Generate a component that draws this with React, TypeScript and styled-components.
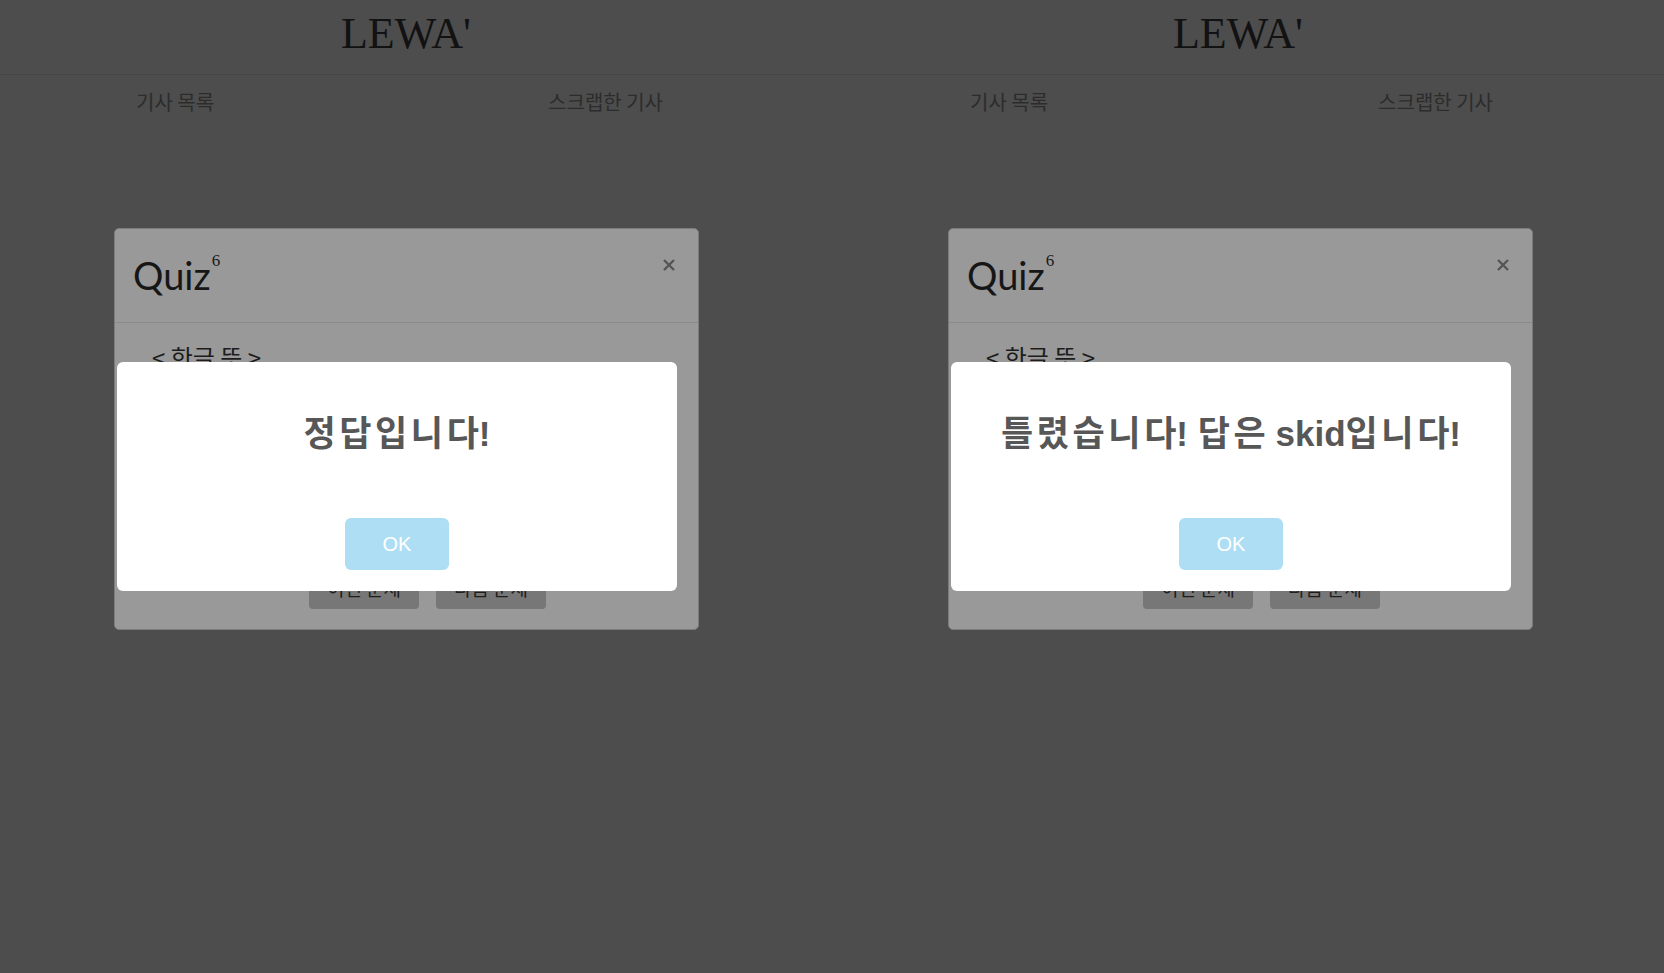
import React from "react";
import styled, { createGlobalStyle } from "styled-components";

const Global = createGlobalStyle`
  html, body { margin: 0; padding: 0; background: #4d4d4d; }
  body { font-family: "Noto Sans CJK KR", "Noto Sans", sans-serif; }
  * { box-sizing: border-box; }
`;

const Page = styled.div`
  display: flex;
  width: 1664px;
  height: 973px;
  overflow: hidden;
  background: #4d4d4d;
`;

const Screen = styled.div<{ $w: number }>`
  position: relative;
  width: ${(p) => p.$w}px;
  flex: none;
  height: 973px;
  display: flex;
  flex-direction: column;
`;

const Header = styled.header`
  height: 75px;
  border-bottom: 1px solid #454545;
  padding: 12px 22px 0 0;
  text-align: center;
`;

const Logo = styled.h1`
  margin: 0;
  font-family: "Liberation Serif", serif;
  font-weight: 400;
  font-size: 44px;
  line-height: 44px;
  color: #121212;
`;

const Nav = styled.nav`
  display: flex;
  justify-content: space-between;
  padding: 14px 171px 16px 136px;
`;

const NavItem = styled.span`
  font-family: "Noto Sans CJK KR", sans-serif;
  font-size: 20px;
  line-height: 26px;
  color: #2c2c2c;
`;

const QuizModal = styled.section`
  margin: 97px 0 0 114px;
  width: 585px;
  background: #999999;
  border: 1px solid #7c7c7c;
  border-radius: 5px;
`;

const QuizHeader = styled.div`
  display: flex;
  justify-content: space-between;
  align-items: flex-start;
  height: 94px;
  padding: 24px 22px 0 18px;
  border-bottom: 1px solid #8a8a8a;
`;

const QuizTitle = styled.h3`
  margin: 0;
  font-family: Lato, "Noto Sans", sans-serif;
  font-weight: 400;
  font-size: 38px;
  line-height: 45px;
  color: #161616;
`;

const Sup = styled.sup`
  font-family: "Liberation Serif", serif;
  font-size: 17px;
  line-height: 0;
  vertical-align: 24px;
  margin-left: 1px;
  color: #1a1a1a;
`;

const CloseBtn = styled.button`
  border: 0;
  background: none;
  padding: 0;
  margin-top: 5px;
  width: 14px;
  height: 14px;
  display: flex;
`;

const QuizBody = styled.div`
  padding: 16px 0 0 37px;
  height: 242px;
`;

const Meaning = styled.p`
  margin: 0;
  font-family: "Noto Sans CJK KR", sans-serif;
  font-size: 24px;
  color: #1c1c1c;
`;

const QuizFooter = styled.div`
  display: flex;
  gap: 17px;
  padding: 0 0 20px 194px;
`;

const GrayButton = styled.button`
  width: 110px;
  height: 44px;
  border: 0;
  border-radius: 4px;
  background: #777777;
  font-family: "Noto Sans CJK KR", sans-serif;
  font-size: 19px;
  color: #1e1e1e;
  padding: 0;
`;

const Alert = styled.div`
  position: absolute;
  left: 117px;
  top: 362px;
  width: 560px;
  height: 229px;
  background: #ffffff;
  border-radius: 6px;
  display: flex;
  flex-direction: column;
  align-items: center;
  padding-top: 50px;
`;

const AlertTitle = styled.h2`
  margin: 0;
  font-family: "Liberation Sans", "Noto Sans CJK KR", sans-serif;
  font-weight: 700;
  font-size: 35px;
  line-height: 44px;
  color: #575757;
  white-space: nowrap;
`;

const Hangul = styled.span`
  letter-spacing: 3.6px;
`;

const OkButton = styled.button`
  margin-top: 62px;
  width: 104px;
  height: 52px;
  border: 0;
  border-radius: 6px;
  background: #aedef4;
  color: #ffffff;
  font-family: "Liberation Sans", Arial, sans-serif;
  font-size: 20px;
  padding: 0;
`;

const CloseIcon = () => (
  <svg width="14" height="14" viewBox="0 0 14 14">
    <path d="M2 2 L12 12 M12 2 L2 12" stroke="#555" strokeWidth="2.4" strokeLinecap="butt" />
  </svg>
);

const QuizScreen = ({ width, message }: { width: number; message: React.ReactNode }) => (
  <Screen $w={width}>
    <Header>
      <Logo>LEWA'</Logo>
    </Header>
    <Nav>
      <NavItem>기사 목록</NavItem>
      <NavItem>스크랩한 기사</NavItem>
    </Nav>
    <QuizModal>
      <QuizHeader>
        <QuizTitle>
          Quiz<Sup>6</Sup>
        </QuizTitle>
        <CloseBtn aria-label="close">
          <CloseIcon />
        </CloseBtn>
      </QuizHeader>
      <QuizBody>
        <Meaning>&lt; 한글 뜻 &gt;</Meaning>
      </QuizBody>
      <QuizFooter>
        <GrayButton>이전 문제</GrayButton>
        <GrayButton>다음 문제</GrayButton>
      </QuizFooter>
    </QuizModal>
    <Alert>
      <AlertTitle>{message}</AlertTitle>
      <OkButton>OK</OkButton>
    </Alert>
  </Screen>
);

export default function App() {
  return (
    <>
      <Global />
      <Page>
        <QuizScreen width={834} message={<><Hangul>정답입니</Hangul>다!</>} />
        <QuizScreen
          width={830}
          message={
            <>
              <Hangul>틀렸습니</Hangul>다! <Hangul>답</Hangul>은 skid<Hangul>입니</Hangul>다!
            </>
          }
        />
      </Page>
    </>
  );
}
